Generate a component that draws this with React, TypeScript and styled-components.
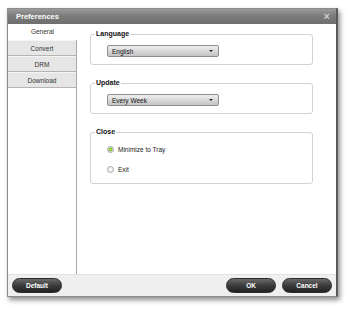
import React, { useState } from "react";
import styled, { createGlobalStyle } from "styled-components";

const GlobalStyle = createGlobalStyle`
  html, body {
    margin: 0;
    padding: 0;
    background: #ffffff;
    font-family: "Liberation Sans", Arial, sans-serif;
  }
`;

const tabs = ["General", "Convert", "DRM", "Download"];

function Dropdown({ value }: { value: string }) {
  return (
    <Select>
      <span>{value}</span>
      <Caret />
    </Select>
  );
}

function Radio({ label, checked, onClick }: { label: string; checked: boolean; onClick: () => void }) {
  return (
    <RadioRow onClick={onClick}>
      <RadioDot $checked={checked} />
      <span>{label}</span>
    </RadioRow>
  );
}

export default function App() {
  const [tab, setTab] = useState("General");
  const [close, setClose] = useState("tray");

  return (
    <Page>
      <GlobalStyle />
      <Window>
        <TitleBar>
          <span>Preferences</span>
          <CloseX>×</CloseX>
        </TitleBar>
        <Body>
          <TabColumn>
            {tabs.map((t) => (
              <Tab key={t} $active={t === tab} onClick={() => setTab(t)}>
                {t}
              </Tab>
            ))}
          </TabColumn>
          <Content>
            <Group $height={35}>
              <legend>Language</legend>
              <Dropdown value="English" />
            </Group>
            <Group $height={35}>
              <legend>Update</legend>
              <Dropdown value="Every Week" />
            </Group>
            <Group $height={56}>
              <legend>Close</legend>
              <RadioList>
                <Radio label="Minimize to Tray" checked={close === "tray"} onClick={() => setClose("tray")} />
                <Radio label="Exit" checked={close === "exit"} onClick={() => setClose("exit")} />
              </RadioList>
            </Group>
          </Content>
        </Body>
        <Footer>
          <PillButton>Default</PillButton>
          <FooterRight>
            <PillButton>OK</PillButton>
            <PillButton>Cancel</PillButton>
          </FooterRight>
        </Footer>
      </Window>
    </Page>
  );
}

const Page = styled.div`
  padding: 8px 0 0 7px;
  width: 350px;
  height: 310px;
  box-sizing: border-box;
`;

const Window = styled.div`
  width: 331px;
  height: 289px;
  box-sizing: border-box;
  display: flex;
  flex-direction: column;
  background: #ffffff;
  border: 1px solid #8c8c8c;
  border-right: 2px solid #5a5a5a;
  box-shadow: 2px 3px 5px rgba(0, 0, 0, 0.45);
`;

const TitleBar = styled.div`
  height: 15px;
  flex: none;
  display: flex;
  align-items: center;
  justify-content: space-between;
  padding: 0 6px 0 8px;
  background: linear-gradient(#9a9a9a, #7c7c7c 45%, #6e6e6e);
  color: #ffffff;
  font-size: 7.5px;
  font-weight: bold;
`;

const CloseX = styled.span`
  color: #d0d0d0;
  font-size: 11px;
  line-height: 1;
  font-weight: bold;
`;

const Body = styled.div`
  flex: 1;
  display: flex;
  min-height: 0;
`;

const TabColumn = styled.div`
  width: 68px;
  flex: none;
  border-right: 1px solid #a8a8a8;
  display: flex;
  flex-direction: column;
`;

const Tab = styled.div<{ $active: boolean }>`
  height: 16px;
  display: flex;
  align-items: center;
  justify-content: center;
  box-sizing: border-box;
  font-size: 6.5px;
  color: #333333;
  cursor: pointer;
  background: ${(p) => (p.$active ? "#ffffff" : "#e6e6e6")};
  border-bottom: 1px solid ${(p) => (p.$active ? "#ffffff" : "#b4b4b4")};
  border-top: ${(p) => (p.$active ? "none" : "1px solid #f4f4f4")};
  margin-right: ${(p) => (p.$active ? "-1px" : "0")};
`;

const Content = styled.div`
  flex: 1;
  display: flex;
  flex-direction: column;
  gap: 14px;
  padding: 6px 23px 0 13px;
`;

const Group = styled.fieldset<{ $height: number }>`
  margin: 0;
  padding: 0 0 0 16px;
  min-width: 0;
  box-sizing: border-box;
  height: ${(p) => p.$height}px;
  border: 1px solid #d2d2d2;
  border-radius: 3px;
  display: block;

  legend {
    font-size: 7px;
    font-weight: bold;
    line-height: 8px;
    color: #111111;
    padding: 0 1px;
    margin-left: -12px;
  }
`;

const Select = styled.div`
  margin-top: 7px;
  width: 112px;
  height: 12px;
  box-sizing: border-box;
  display: flex;
  align-items: center;
  justify-content: space-between;
  padding: 0 5px 0 4px;
  border: 1px solid #8e8e8e;
  border-radius: 2px;
  background: linear-gradient(#f0f0f0, #d6d6d6 55%, #c4c4c4);
  font-size: 6.5px;
  color: #111111;
`;

const Caret = styled.span`
  width: 0;
  height: 0;
  border-left: 2px solid transparent;
  border-right: 2px solid transparent;
  border-top: 2px solid #222222;
`;

const RadioList = styled.div`
  display: flex;
  flex-direction: column;
  gap: 11px;
  padding-top: 9px;
`;

const RadioRow = styled.label`
  display: flex;
  align-items: center;
  gap: 4px;
  font-size: 6.5px;
  color: #222222;
  cursor: pointer;
  height: 9px;
`;

const RadioDot = styled.span<{ $checked: boolean }>`
  width: 7px;
  height: 7px;
  border-radius: 50%;
  box-sizing: border-box;
  border: 1px solid #a8a8a8;
  background: ${(p) =>
    p.$checked
      ? "radial-gradient(circle, #b8f05a 0, #7cc61c 45%, #d8d8d8 60%, #eeeeee 100%)"
      : "radial-gradient(circle, #ffffff 0, #f0f0f0 50%, #dcdcdc 100%)"};
`;

const Footer = styled.div`
  height: 21px;
  flex: none;
  display: flex;
  align-items: center;
  justify-content: space-between;
  padding: 0 4px 0 4px;
  background: #efefef;
  border-top: 1px solid #e2e2e2;
`;

const FooterRight = styled.div`
  display: flex;
  gap: 6px;
`;

const PillButton = styled.button`
  width: 50px;
  height: 15px;
  border-radius: 8px;
  border: 1px solid #2a2a2a;
  background: linear-gradient(#6a6a6a, #3c3c3c 50%, #222222);
  color: #ffffff;
  font-family: "Liberation Sans", Arial, sans-serif;
  font-size: 6.5px;
  font-weight: bold;
  padding: 0;
  cursor: pointer;
`;
